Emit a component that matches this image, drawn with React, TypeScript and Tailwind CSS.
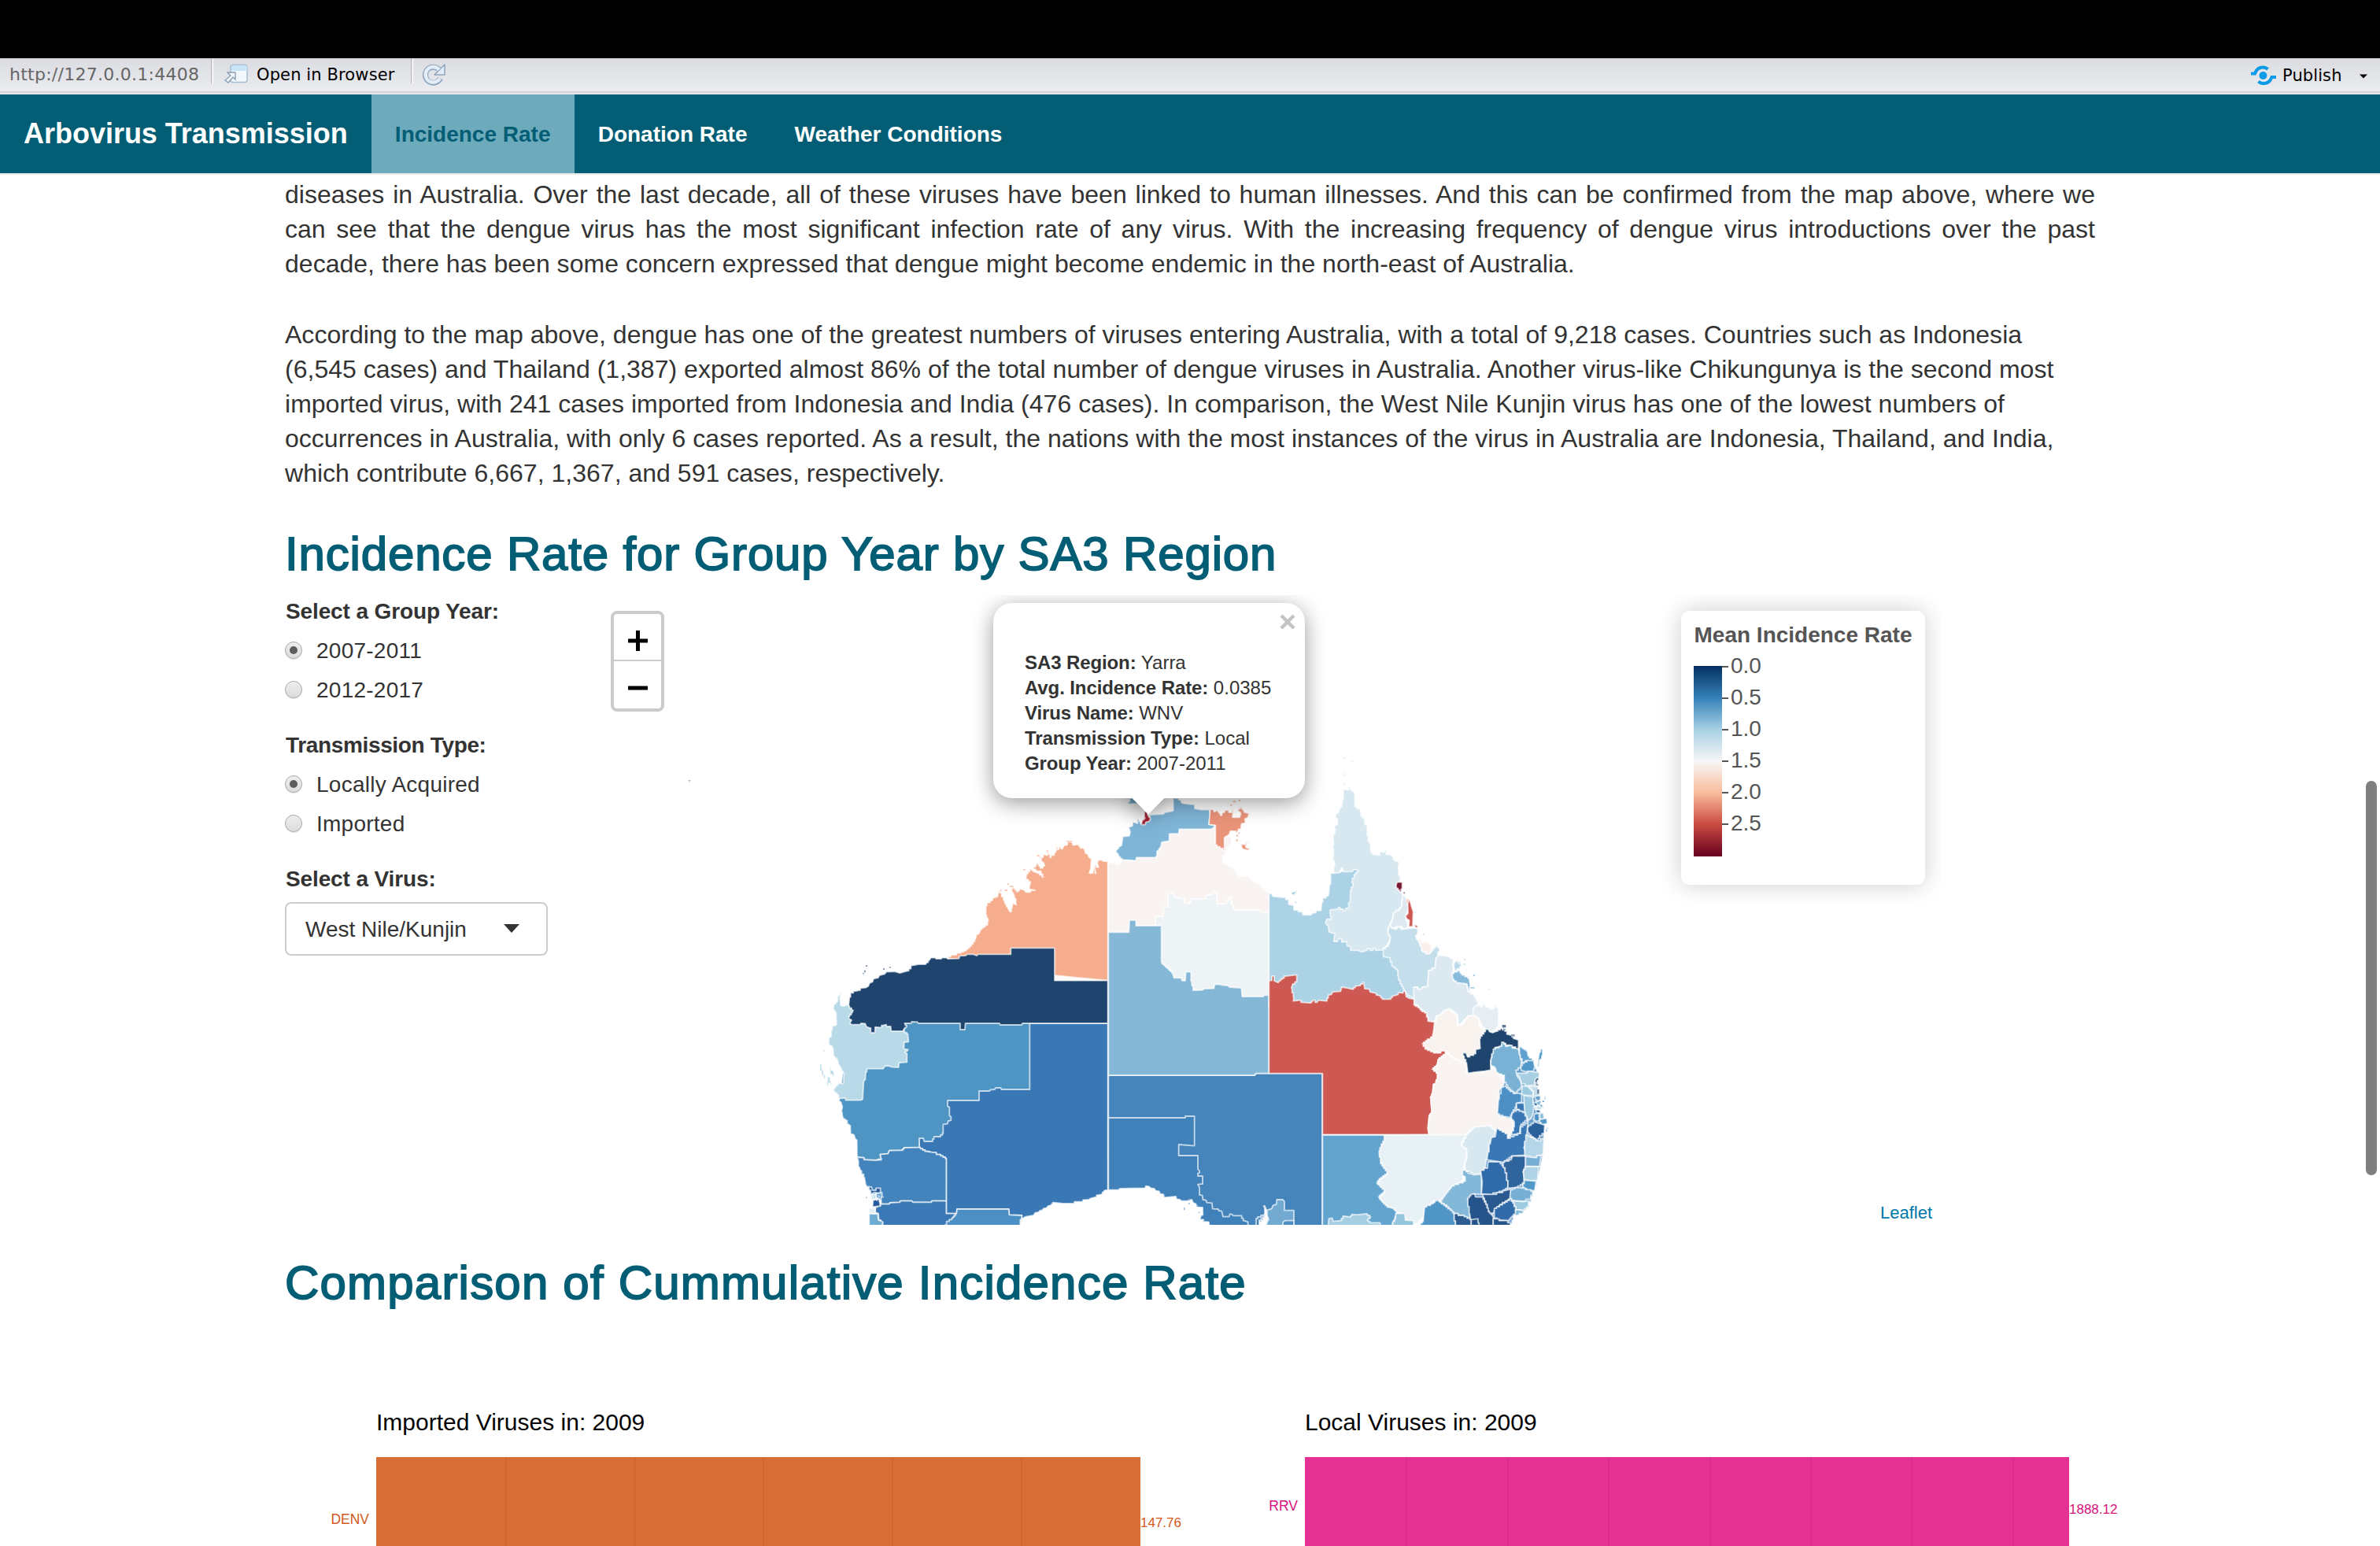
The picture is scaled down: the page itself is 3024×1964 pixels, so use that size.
import React from "react";

type Region = { fill: string; d: string };

/* All region outlines live in one drawing space, three units to a page pixel. */
const WA: Region[] = [
  { fill: "#3a77b5", d: "865,1080 1163,1080 1163,1715 1150,1717 1145,1724 1138,1732 1125,1735 1115,1743 1098,1747 1090,1752 1075,1753 1060,1760 1045,1760 1025,1767 985,1766 955,1763 945,1774 935,1776 930,1783 918,1786 912,1793 905,1793 900,1799 885,1803 880,1812 850,1817 840,1822 833,1828 835,1812 787,1810 785,1788 588,1788 586,1805 547,1805 547,1595 520,1580 470,1568 444,1553 430,1300 700,1080" },
  { fill: "#4f95c4", d: "865,1060 865,1332 757,1332 755,1326 735,1326 732,1332 715,1333 712,1338 672,1338 672,1374 552,1374 552,1396 559,1400 559,1432 565,1436 565,1450 554,1452 552,1463 535,1465 535,1500 522,1512 503,1512 492,1530 463,1530 460,1518 444,1518 444,1553 388,1554 378,1564 330,1565 325,1577 295,1580 300,1600 290,1597 278,1602 240,1600 225,1592 207,1590 206,1525 200,1520 195,1505 182,1500 181,1470 172,1464 165,1450 152,1440 150,1420 147,1418 151,1398 145,1380 138,1376 140,1366 180,1060" },
  { fill: "#b8d9e8", d: "148,960 142,985 145,1012 158,1014 170,1008 200,1040 390,1080 383,1110 400,1120 403,1150 390,1152 382,1168 388,1178 402,1180 388,1190 397,1195 397,1228 367,1230 365,1248 337,1246 330,1242 312,1243 307,1253 247,1253 240,1265 238,1295 232,1300 228,1370 220,1373 170,1373 155,1365 140,1366 132,1352 118,1340 115,1333 130,1315 138,1308 155,1310 157,1270 148,1262 145,1248 137,1240 132,1218 117,1205 115,1172 98,1160 100,1135 108,1130 108,1105 116,1090 128,1086 127,1040 115,1025 120,1005 132,998 134,975" },
  { fill: "#f5ad8d", d: "1163,463 1145,462 1142,458 1128,457 1122,468 1128,485 1112,478 1117,508 1110,485 1105,508 1092,508 1098,490 1100,453 1092,448 1086,435 1078,432 1075,418 1068,412 1060,412 1050,398 1030,401 1028,390 1010,386 1008,400 995,402 990,415 978,408 975,418 962,400 968,420 960,428 958,440 948,438 946,448 933,424 932,440 918,436 915,448 895,440 910,455 908,462 918,468 922,480 908,488 892,466 888,482 876,486 893,500 905,500 917,522 898,508 882,502 868,492 850,518 852,532 868,540 862,568 885,573 850,580 845,572 828,567 818,578 800,558 795,575 805,590 808,605 815,628 800,622 798,640 791,655 785,648 780,635 772,625 768,610 755,583 747,575 742,597 725,602 722,612 705,620 698,632 698,670 708,690 700,705 678,722 672,738 662,742 658,760 640,785 620,803 597,812 553,826 555,832 570,860 1163,917" },
  { fill: "#1f446e", d: "1163,917 960,917 960,793 793,793 793,817 668,817 663,822 650,817 628,817 620,822 598,823 595,833 553,834 548,830 530,830 528,834 508,834 505,830 488,830 482,840 473,848 468,855 440,855 415,860 408,872 400,880 385,884 370,888 350,882 318,884 312,892 292,897 288,906 270,910 266,922 255,926 250,938 240,944 222,946 215,954 200,957 186,964 178,980 175,1010 180,1022 192,1030 188,1040 176,1053 176,1062 186,1068 180,1078 185,1085 220,1084 222,1080 238,1081 242,1092 255,1098 262,1116 275,1116 276,1094 295,1096 305,1088 318,1085 320,1092 335,1092 337,1110 383,1110 385,1102 397,1092 388,1080 413,1080 415,1074 437,1075 440,1080 600,1080 600,1104 618,1104 620,1080 750,1080 752,1086 835,1086 837,1080 1163,1080" },
  { fill: "#4384bc", d: "207,1590 225,1592 240,1600 278,1602 300,1600 295,1580 325,1577 330,1565 378,1564 388,1554 444,1553 470,1568 498,1572 520,1580 547,1595 547,1757 492,1757 490,1762 420,1762 415,1757 372,1757 370,1762 332,1764 330,1769 302,1769 290,1740 280,1730 262,1735 252,1710 240,1698 235,1668 228,1655 220,1642 216,1630 212,1625 212,1605" },
  { fill: "#3b79b6", d: "278,1780 302,1769 330,1769 332,1764 370,1762 372,1757 415,1757 420,1762 490,1762 492,1757 547,1757 547,1805 586,1805 545,1860 300,1860 305,1838 290,1830 288,1805 276,1800" },
  { fill: "#4b8fc4", d: "588,1788 785,1788 787,1810 835,1812 833,1828 825,1860 540,1860 550,1835 565,1828 586,1805" },
  { fill: "#6dadd3", d: "253,1805 286,1806 288,1830 304,1836 305,1846 298,1860 253,1860" },
  { fill: "#28599a", d: "250,1702 262,1704 266,1716 292,1708 300,1724 288,1728 272,1724 262,1730" },
  { fill: "#72aad2", d: "278,1728 298,1726 306,1742 292,1750 276,1744" },
  { fill: "#c6deed", d: "258,1734 276,1732 284,1752 262,1752" },
  { fill: "#28599a", d: "268,1754 290,1750 296,1776 266,1780" },
  { fill: "#e6eff5", d: "256,1785 276,1783 276,1806 248,1804" },
  { fill: "#b8d9e8", d: "67,1238 70,1256 82,1280 78,1284 68,1260" },
  { fill: "#b8d9e8", d: "105,1240 108,1256 118,1262 122,1285 108,1275 100,1258" },
  { fill: "#b8d9e8", d: "90,1280 102,1285 112,1315 98,1308" },
];

/* Offset by the Northern Territory tile. */
const NORTH: Region[] = [
  { fill: "#4585bb", d: "25,1278 583,1278 587,1271 840,1271 840,1860 530,1860 440,1825 395,1780 350,1700 25,1600" },
  { fill: "#4181ba", d: "25,1440 318,1440 318,1434 353,1434 353,1547 293,1542 293,1584 366,1584 366,1636 372,1642 372,1650 366,1652 366,1662 384,1662 384,1692 366,1694 372,1706 372,1734 383,1736 385,1752 397,1754 400,1763 420,1765 422,1787 443,1788 446,1794 457,1796 462,1817 485,1817 488,1807 497,1808 500,1813 530,1813 542,1832 557,1837 557,1860 415,1860 405,1837 385,1836 388,1828 374,1828 378,1812 385,1810 384,1782 362,1780 358,1768 348,1764 343,1752 325,1757 302,1757 298,1752 285,1750 282,1740 237,1744 235,1732 222,1730 218,1720 205,1718 200,1710 186,1708 180,1702 168,1700 165,1708 68,1710 64,1715 25,1715" },
  { fill: "#4585bb", d: "588,1860 588,1824 612,1812 622,1808 604,1830 596,1860" },
  { fill: "#fefefe", d: "598,1860 606,1836 618,1822 624,1806 617,1776 626,1788 630,1810 636,1824 628,1834 624,1860" },
  { fill: "#72aad2", d: "625,1860 630,1838 636,1828 630,1812 630,1792 648,1786 652,1774 665,1770 667,1752 690,1752 696,1760 696,1793 732,1793 732,1860" },
  { fill: "#4b8fc4", d: "690,1860 690,1838 698,1832 732,1832 732,1860" },
  { fill: "#f9f3f1", d: "25,462 36,470 45,466 65,476 75,458 100,461 130,461 132,448 205,448 210,425 222,420 228,390 257,385 257,358 293,357 295,340 430,335 433,400 467,420 467,372 490,362 495,395 480,410 466,440 458,455 470,472 490,482 512,498 516,512 530,520 560,518 575,540 600,550 615,566 637,583 637,660 607,658 605,648 505,648 490,600 475,625 440,625 437,580 425,578 422,590 398,592 397,606 340,606 335,624 318,622 310,606 278,600 272,583 253,583 253,636 237,636 233,672 205,674 205,708 130,708 130,687 105,687 103,733 25,733" },
  { fill: "#7fb5d7", d: "50,425 65,408 75,402 80,368 104,366 108,352 102,332 116,328 118,312 136,318 134,296 150,318 170,305 185,285 235,282 240,276 272,270 272,215 300,228 305,240 326,244 350,246 358,262 380,266 410,265 413,290 408,322 430,325 425,336 415,340 295,340 293,357 257,358 257,385 228,390 225,408 216,420 210,425 210,440 205,448 132,448 130,460 105,458 80,457 66,446 60,432" },
  { fill: "#7fb5d7", d: "98,245 108,222 128,222 140,242 112,244" },
  { fill: "#a72338", d: "158,272 172,274 176,288 186,300 181,310 167,314 166,323 150,323 154,306 165,297" },
  { fill: "#e99379", d: "413,265 425,264 428,274 440,268 456,288 460,276 475,268 492,276 502,262 498,295 525,295 530,280 516,268 530,256 545,276 562,280 556,296 545,302 548,316 532,320 530,340 510,348 490,347 485,362 467,372 467,420 433,400 433,325 408,322" },
  { fill: "#e99379", d: "530,397 545,398 562,386 548,402 550,410 562,414 562,421 545,418 535,415" },
  { fill: "#eef3f6", d: "205,708 205,674 233,672 237,636 253,636 253,583 272,583 278,600 310,606 318,622 335,624 340,606 397,606 398,592 422,590 425,578 437,580 440,625 472,625 478,612 488,600 494,615 490,620 500,630 505,648 605,648 607,658 637,660 637,973 617,973 615,978 535,978 532,945 487,942 480,936 455,934 452,931 430,932 427,947 388,948 385,953 350,954 345,935 340,920 340,884 320,884 318,918 305,917 303,907 275,907 270,888 227,848" },
  { fill: "#85b8d7", d: "25,733 103,733 105,687 130,687 130,708 227,708 227,848 270,888 275,907 303,907 305,917 318,918 320,884 340,884 340,920 350,954 385,953 388,948 427,947 430,932 452,931 455,934 480,936 487,942 532,945 535,978 615,978 617,973 637,973 637,1271 587,1271 583,1278 25,1278" },
  { fill: "#abd2e5", d: "637,583 648,587 652,596 690,600 712,608 712,626 728,630 735,648 762,655 770,667 797,667 802,660 815,658 818,650 835,650 838,618 845,602 862,595 865,585 867,556 872,548 872,508 980,490 1000,700 1100,800 1160,900 1200,1000 900,1060 637,1020" },
  { fill: "#abd2e5", d: "722,580 735,578 748,572 742,582 732,592 722,588" },
  { fill: "#d8e8f0", d: "920,187 935,190 942,180 950,190 964,200 965,255 978,262 985,260 988,290 1003,302 1003,322 1012,326 1012,365 1018,368 1014,385 1024,392 1025,425 1035,436 1055,438 1062,425 1075,428 1080,418 1088,436 1108,440 1112,456 1138,468 1130,480 1132,515 1138,522 1138,540 1125,542 1120,558 1137,578 1148,588 1148,608 1142,612 1145,630 1130,650 1112,658 1108,685 1098,702 1098,712 1090,715 1092,740 1100,745 1097,768 1085,785 1070,800 1048,802 1038,795 1028,802 1015,795 1008,802 992,808 975,802 948,802 948,788 935,785 933,768 918,770 910,757 900,760 898,768 884,768 888,738 866,732 862,705 852,698 858,682 874,684 870,662 870,648 898,645 902,638 925,652 930,642 942,640 940,622 946,618 948,572 960,550 952,542 965,512 978,498 960,492 955,502 922,502 916,488 905,506 880,508 888,480 886,462 880,455 884,430 880,402 886,395 878,370 890,350 885,328 898,322 898,300 888,298 894,280 904,275 902,262 915,255 916,230 920,228" },
  { fill: "#761a34", d: "1125,542 1145,542 1145,568 1137,578 1120,560" },
  { fill: "#dce9f1", d: "1150,590 1160,600 1164,620 1168,650 1157,670 1168,708 1165,716 1150,722 1140,710 1130,722 1120,712 1110,722 1100,712 1098,705 1108,685 1112,658 1130,650 1145,630 1142,612" },
  { fill: "#cc5650", d: "1166,624 1172,606 1177,622 1182,640 1187,655 1185,705 1186,711 1170,712 1172,688 1162,682 1157,670 1167,660" },
  { fill: "#cc5650", d: "1190,703 1204,708 1204,716 1196,716" },
];

/* Offset by the eastern tile. The first outline backs the small coastal regions. */
const EAST: Region[] = [
  { fill: "#6a9fcd", d: "470,600 560,420 640,290 665,320 690,345 705,370 700,410 712,455 712,520 726,560 724,640 718,700 700,780 686,820 666,880 640,905 612,915 596,960 300,960 420,800" },
  { fill: "#c5deeb", d: "135,-190 150,-182 160,-178 170,-190 183,-178 212,-182 243,-183 245,-165 236,-150 250,-135 262,-98 285,-85 300,-100 318,-118 330,-98 320,-88 325,-72 313,-66 311,-30 286,-22 282,40 262,42 258,50 232,42 230,85 208,75 195,58 180,30 168,0 168,-22 148,-38 136,-70 113,-74 113,-105 128,-112 138,-130 140,-152 130,-160" },
  { fill: "#faf0ec", d: "237,-150 252,-142 262,-130 280,-132 292,-122 298,-100 288,-85 262,-93 256,-118" },
  { fill: "#dce9f1", d: "325,-80 345,-78 362,-74 380,-64 378,-42 380,-25 374,-5 385,20 430,30 436,60 455,68 478,105 462,122 458,150 440,152 425,165 400,190 396,150 390,142 365,125 345,130 330,148 315,152 310,170 288,175 275,140 250,122 245,110 230,108 230,85 228,42 258,50 262,42 282,40 286,-22 311,-30 313,-66" },
  { fill: "#bad8e8", d: "380,-48 395,-62 400,-48 412,-44 402,-28 385,-20" },
  { fill: "#88bada", d: "375,-10 402,-22 408,-10 440,8 445,40 438,58 432,30 395,25 378,12" },
  { fill: "#e6eef4", d: "455,122 475,108 488,118 492,100 506,118 530,125 540,112 552,120 552,190 530,215 505,205 490,195 475,160 455,150" },
  { fill: "#f9f3f0", d: "310,173 318,152 335,146 345,132 365,127 390,145 398,188 415,185 425,165 440,152 458,150 475,162 480,190 500,205 480,238 482,275 465,295 440,305 420,290 415,298 432,320 425,335 400,320 385,315 355,290 310,293 275,278 262,258 285,240 300,232 305,205" },
  { fill: "#cd5952", d: "-323,18 -312,16 -312,0 -303,0 -303,18 -290,24 -270,8 -260,0 -217,-5 -217,22 -232,30 -238,45 -228,80 -230,95 -205,92 -198,100 -165,102 -155,92 -140,100 -135,92 -105,95 -95,72 -85,70 -80,60 -50,58 -46,42 -25,45 -5,50 10,38 22,36 38,24 42,48 60,50 62,60 82,65 90,72 100,75 112,88 138,88 150,76 170,70 170,62 188,65 190,56 197,60 200,78 210,84 230,88 230,110 250,120 255,130 275,140 285,172 308,175 305,205 300,232 285,240 262,258 275,278 310,293 353,285 345,300 322,318 318,340 300,355 312,362 322,378 315,395 312,410 304,412 300,450 293,460 298,520 288,530 283,580 287,604 -119,604 -119,371 -323,371" },
  { fill: "#f9f4f2", d: "355,292 385,315 400,320 425,335 432,365 480,368 520,358 540,350 545,372 562,380 575,400 570,418 555,430 552,465 547,525 560,535 600,542 612,555 605,590 590,618 580,600 555,585 545,582 540,592 520,570 460,576 430,604 287,604 283,580 288,530 298,520 293,460 300,450 304,412 312,410 315,395 322,378 312,362 300,355 318,340 322,318 345,300" },
  { fill: "#1f446e", d: "505,203 512,202 518,212 530,216 545,210 562,200 580,210 588,222 600,225 612,238 628,244 628,278 605,270 570,256 560,268 540,272 530,300 522,320 522,358 500,362 465,366 435,370 430,330 418,305 415,293 428,292 434,308 465,296 465,280 482,276 480,238" },
  { fill: "#7ab2d5", d: "535,278 560,268 568,252 582,268 600,264 608,274 628,278 632,300 640,320 636,350 618,358 622,380 636,395 640,425 630,432 615,448 590,425 578,405 570,378 545,368 540,350 522,340 524,312" },
  { fill: "#5fa0cf", d: "632,265 645,275 662,285 665,305 685,318 690,328 662,322 645,330 632,300" },
  { fill: "#5098c8", d: "645,332 665,322 685,322 690,345 685,362 660,366 640,360 636,350" },
  { fill: "#5098c8", d: "708,290 716,278 724,298 718,302 716,315 708,320 706,345 700,345 704,315" },
  { fill: "#a8d0e2", d: "622,370 658,370 665,362 708,368 706,390 692,396 690,415 665,418 640,410 636,395" },
  { fill: "#1f446e", d: "693,392 700,387 707,390 698,404 707,420 698,418 690,405" },
  { fill: "#9ccae0", d: "642,418 665,420 680,435 688,455 655,455 640,450" },
  { fill: "#c5deeb", d: "665,418 700,420 712,455 688,458 680,438" },
  { fill: "#4b8fc4", d: "565,425 578,420 600,440 615,448 625,446 640,450 640,480 620,485 618,500 605,520 595,538 575,535 548,525 552,470" },
  { fill: "#3a77b5", d: "620,485 650,483 655,520 640,515 622,508" },
  { fill: "#9ccae0", d: "648,455 680,460 688,490 684,520 678,540 665,550 652,520" },
  { fill: "#3a77b5", d: "605,520 625,510 650,520 662,545 635,570 632,600 600,605 612,575 612,555 600,542" },
  { fill: "#30649c", d: "683,465 692,462 694,480 686,482" },
  { fill: "#84b8d9", d: "696,478 712,472 714,490 698,495" },
  { fill: "#c5deeb", d: "690,495 706,496 722,488 724,505 706,512 692,508" },
  { fill: "#30649c", d: "694,510 712,510 710,522 696,520" },
  { fill: "#84b8d9", d: "726,458 732,458 732,472 726,472" },
  { fill: "#4b8fc4", d: "684,545 692,525 706,522 708,550 696,554" },
  { fill: "#84b8d9", d: "710,525 722,520 726,542 710,548" },
  { fill: "#5098c8", d: "710,546 736,542 738,562 720,566 708,558" },
  { fill: "#d7e8f0", d: "430,605 460,576 520,570 540,590 535,610 518,640 515,690 505,700 500,740 480,755 460,755 440,745 425,740 422,715 432,690 430,660 410,645" },
  { fill: "#e8f1f6", d: "118,606 430,604 410,640 412,650 430,660 430,690 420,720 415,780 400,792 375,800 345,840 325,860 305,855 295,870 268,882 268,915 250,935 230,948 195,930 195,905 165,900 150,885 130,880 105,855 100,840 120,822 105,805 90,788 100,775 130,752 118,735 100,700 95,660 112,635" },
  { fill: "#62a4ce", d: "-119,606 115,606 118,620 108,640 97,665 98,690 105,715 130,750 100,772 88,788 105,805 120,818 95,842 105,855 130,880 150,885 165,900 155,930 140,960 -119,960" },
  { fill: "#a5cee2", d: "-98,960 -95,925 -82,922 -78,935 -50,932 -38,915 -15,918 -5,908 10,910 48,906 65,918 52,930 65,940 100,940 105,960" },
  { fill: "#96c5de", d: "145,960 152,935 160,925 160,905 195,905 197,930 228,932 228,960" },
  { fill: "#84b8d9", d: "415,740 425,740 440,752 462,758 480,755 487,758 487,832 455,830 450,842 435,850 445,865 442,925 415,912 380,905 360,880 330,860 345,838 375,800 425,782 425,765 415,760" },
  { fill: "#4f95c6", d: "235,960 265,935 270,880 300,868 318,852 330,862 355,880 380,900 390,960" },
  { fill: "#3a77b5", d: "545,578 560,588 582,600 590,618 632,600 640,575 665,555 660,600 662,625 650,650 655,682 605,685 570,710 508,700 512,670 520,640 525,615 540,612" },
  { fill: "#2f6aa9", d: "484,740 510,732 512,708 555,708 575,730 580,750 590,805 565,820 520,832 487,830 490,785" },
  { fill: "#30649c", d: "566,710 600,700 605,686 655,686 655,730 645,745 652,780 640,795 620,805 590,808 580,750" },
  { fill: "#29609a", d: "662,575 690,556 710,562 728,568 726,600 710,608 700,628 680,612 665,598" },
  { fill: "#b4d6e8", d: "658,605 690,620 700,628 725,620 722,680 705,684 690,692 655,685 648,655" },
  { fill: "#76aed4", d: "655,688 690,692 705,684 714,684 708,726 655,724" },
  { fill: "#b0d4e6", d: "655,726 705,726 700,780 670,778 650,775 646,745" },
  { fill: "#4f98c8", d: "652,778 695,782 690,818 665,815 642,804" },
  { fill: "#76aed4", d: "598,815 620,806 645,808 685,820 672,850 640,858 605,855 592,840" },
  { fill: "#9ccae0", d: "605,857 645,860 668,856 664,880 645,892 620,890" },
  { fill: "#84b8d9", d: "608,900 620,890 648,894 645,905 615,912" },
  { fill: "#29598f", d: "490,832 530,832 560,825 575,818 598,812 595,850 560,870 545,885 525,912 512,895 505,870" },
  { fill: "#306aa9", d: "540,885 572,866 598,850 608,865 620,890 612,908 590,932 560,930 532,922" },
  { fill: "#25548a", d: "433,850 448,832 460,830 465,842 490,842 505,870 515,898 532,915 532,960 445,960 445,925 442,905" },
  { fill: "#2c5c92", d: "380,905 415,912 448,928 448,960 390,960" },
  { fill: "#25548a", d: "448,928 470,925 478,940 475,960 448,960" },
  { fill: "#25548a", d: "532,925 575,932 598,940 596,960 532,960" },
];

const pebbles: [number, number, number, number, string][] = [
  [240, 858, 6, 6, "#8b9fb8"], [234, 878, 6, 8, "#8b9fb8"], [228, 888, 6, 4, "#8b9fb8"], [306, 870, 6, 6, "#8b9fb8"], [330, 864, 5, 6, "#8b9fb8"],
  [78, 1182, 6, 5, "#d5e8f1"], [780, 546, 6, 6, "#f8cbb6"], [790, 555, 12, 6, "#f8cbb6"], [770, 570, 10, 6, "#f8cbb6"], [840, 492, 8, 5, "#f8cbb6"],
  [893, 438, 8, 6, "#f8cbb6"], [930, 420, 5, 8, "#f8cbb6"], [1005, 384, 22, 4, "#f8cbb6"], [752, 570, 6, 6, "#f8cbb6"], [1452, 1782, 5, 10, "#a0c0dd"],
  [1470, 1750, 6, 5, "#a0c0dd"], [1470, 1764, 5, 6, "#a0c0dd"], [1500, 1772, 6, 5, "#a0c0dd"], [1508, 1798, 5, 6, "#a0c0dd"],
  [2058, 66, 10, 5, "#eaf2f6"], [2088, 78, 12, 5, "#eaf2f6"], [2058, 127, 5, 6, "#eaf2f6"], [2065, 132, 5, 6, "#eaf2f6"], [2059, 163, 10, 8, "#eaf2f6"],
  [1640, 232, 10, 6, "#f2bfae"], [1662, 228, 6, 6, "#f2bfae"], [1630, 246, 6, 6, "#f2bfae"], [1650, 345, 6, 6, "#f2bfae"], [1652, 362, 8, 6, "#f2bfae"],
  [1652, 378, 6, 8, "#f2bfae"], [1660, 352, 6, 5, "#f2bfae"], [1876, 615, 6, 7, "#cbe3ef"], [2302, 605, 6, 16, "#fbd3c0"], [2290, 580, 5, 6, "#a7788a"],
  [2364, 738, 6, 6, "#d5e8f1"], [2500, 845, 6, 10, "#d5e8f1"], [2520, 834, 6, 6, "#d5e8f1"], [2518, 852, 8, 6, "#d5e8f1"], [2556, 894, 6, 6, "#a7cbe2"],
  [2545, 942, 16, 5, "#a7cbe2"], [2610, 948, 12, 5, "#eef5f7"], [2666, 1086, 14, 10, "#5d7694"], [2670, 1100, 8, 8, "#8b9fb8"], [2700, 1122, 14, 8, "#8b9fb8"],
  [2800, 1332, 6, 16, "#5d7694"], [240, 1742, 5, 5, "#a0c0dd"], [2832, 1482, 6, 12, "#bcd8ea"], [2836, 1475, 6, 8, "#d5e8f1"], [2786, 1368, 6, 6, "#84b8d9"],
  [2805, 1378, 8, 5, "#84b8d9"], [2792, 1386, 6, 6, "#30649c"], [2812, 1390, 5, 6, "#4b8fc4"], [2820, 1375, 5, 5, "#4b8fc4"],
  [66, 1236, 6, 24, "#cfe4ef"], [72, 1258, 6, 18, "#cfe4ef"], [80, 1276, 5, 14, "#cfe4ef"], [92, 1302, 5, 14, "#cfe4ef"],
];

const dust: [number, number][] = [
  [262, 1738], [268, 1744], [276, 1740], [284, 1745], [270, 1750], [280, 1752], [265, 1730], [288, 1738],
  [2795, 1370], [2802, 1374], [2810, 1382], [2798, 1388], [2806, 1394], [2815, 1386], [2796, 1402], [2814, 1400], [2806, 1408], [2790, 1396],
];

/* Turns sloping edges into small stairs; neighbours sharing an edge get the same stairs. */
function stepped(d: string): string {
  const pts = d.split(" ").map((p) => p.split(",").map(Number));
  const out: string[] = [];
  pts.forEach((a, i) => {
    const b = pts[(i + 1) % pts.length];
    out.push(a.join(","));
    const dx = Math.abs(b[0] - a[0]);
    const dy = Math.abs(b[1] - a[1]);
    if (Math.min(dx, dy) < 7 || Math.max(dx, dy) > 60) return;
    const flip = a[0] > b[0] || (a[0] === b[0] && a[1] > b[1]);
    const [s, e] = flip ? [b, a] : [a, b];
    const n = Math.max(1, Math.round(Math.min(dx, dy) / 6));
    const stairs: string[] = [];
    for (let k = 0; k < n; k++) {
      const x = Math.round(s[0] + ((e[0] - s[0]) * (k + 0.5)) / n);
      const y0 = Math.round(s[1] + ((e[1] - s[1]) * k) / n);
      const y1 = Math.round(s[1] + ((e[1] - s[1]) * (k + 1)) / n);
      stairs.push(`${x},${y0}`, `${x},${y1}`);
    }
    out.push(...(flip ? stairs.reverse() : stairs));
  });
  return out.join(" ");
}

function Shapes({ list }: { list: Region[] }) {
  return (
    <>
      {list.map((r, i) => (
        <polygon key={i} points={stepped(r.d)} fill={r.fill} stroke="#ffffff" strokeOpacity="0.68" strokeWidth="5.5" strokeLinejoin="round" />
      ))}
    </>
  );
}

function AustraliaMap() {
  return (
    <svg className="absolute inset-0 block h-full w-full" viewBox="756 756 1710 800" aria-hidden="true">
      <g transform="translate(1020 940) scale(0.333333)">
        <Shapes list={WA} />
        <g transform="translate(1140 0)">
          <Shapes list={NORTH} />
        </g>
        <g transform="translate(2100 900)">
          <Shapes list={EAST} />
        </g>
        {pebbles.map(([x, y, w, h, f], i) => (
          <rect key={i} x={x} y={y} width={w} height={h} fill={f} />
        ))}
        {dust.map(([x, y], i) => (
          <rect key={i} x={x} y={y} width="5" height="5" fill="#ffffff" opacity="0.85" />
        ))}
      </g>
      <path d="M874.500 991.500 h3 M876 991.500 v2.500" stroke="#a9bdd0" strokeWidth="1" />
    </svg>
  );
}

function Toolbar() {
  return (
    <div className="flex h-[46px] items-center border-b-2 border-[#e7e7eb] font-['DejaVu_Sans',sans-serif] text-[21px] leading-none shadow-[inset_0_-2px_0_#d4d4d8] bg-linear-to-b from-[#dbdce1] to-[#ecedf1]">
      <span className="ml-[12px] -mt-[3px] w-[256px] text-[22px] tracking-[0.26px] text-[#666]">http://127.0.0.1:4408</span>
      <span className="-mt-[12px] h-[32px] w-[3px] border-r border-l border-l-[#b9b9bd] border-r-white" />
      <svg className="ml-[13px] -mt-[4px] h-[26px] w-[32px]" viewBox="0 0 32 26">
        <rect x="9" y="1.500" width="21" height="22" rx="3" fill="#f3f8fc" stroke="#a3bccf" strokeWidth="1.500" />
        <path d="M10 9 V4 q0-2 3-2 h14 q3 0 3 2 v5z" fill="#c9e3f7" />
        <path d="M2 21 L9 15 L5 11 H15 V20 L12 17 L6 24 Z" fill="#f4f7fa" stroke="#8aa0b4" strokeWidth="1.400" />
      </svg>
      <span className="ml-[10px] -mt-[2px] w-[196px] tracking-[0.12px] text-black">Open in Browser</span>
      <span className="-mt-[12px] h-[32px] w-[3px] border-r border-l border-l-[#b9b9bd] border-r-white" />
      <svg className="ml-[10px] h-[32px] w-[32px]" viewBox="0 0 32 32">
        <path d="M24.500 19.500 A10 10 0 1 1 22.500 8" fill="none" stroke="#8ea4bd" strokeWidth="7" />
        <path d="M30 2 V15 H17 Z" fill="#e3edf8" stroke="#8ea4bd" strokeWidth="1.500" strokeLinejoin="round" />
        <path d="M24 19.500 A9.800 9.800 0 1 1 23 8.500" fill="none" stroke="#e3edf8" strokeWidth="4.500" />
      </svg>
      <svg className="ml-auto h-[26px] w-[34px]" viewBox="0 0 34 26">
        <circle cx="16.500" cy="13" r="5" fill="#0d9be8" />
        <path d="M1 10.500 H6 C8 5 12 2.500 16 2.500 C19 2.500 21 3.500 22.500 5" fill="none" stroke="#0d9be8" strokeWidth="4" />
        <path d="M33 15 H27.500 C25.500 20.500 21.500 23 17.500 23 C14 23 12 22 10.500 20.500" fill="none" stroke="#0d9be8" strokeWidth="4" />
      </svg>
      <span className="ml-[7px] w-[98px] tracking-[0.1px] text-black">Publish</span>
      <svg className="mr-[16px] mt-[2px] h-[6px] w-[10px]" viewBox="0 0 10 6">
        <path d="M0 0.500 H10 L5 5.500 Z" fill="#000" />
      </svg>
    </div>
  );
}

function NavBar() {
  return (
    <nav className="flex h-[102px] items-stretch border-b-2 border-[#e7e7e7] bg-[#035e75] pt-px text-[28px] font-bold text-white">
      <div className="flex items-center px-[30px] pb-px text-[36px] tracking-[-0.02px]">Arbovirus Transmission</div>
      <div className="-mt-px flex w-[258px] items-center justify-center bg-[#6dabbc] pt-[2px] text-[#035e75]">Incidence Rate</div>
      <div className="flex items-center px-[30px]">Donation Rate</div>
      <div className="flex items-center px-[30px]">Weather Conditions</div>
    </nav>
  );
}

function Radio({ label, checked }: { label: string; checked?: boolean }) {
  return (
    <label className="flex h-[50px] items-center gap-[18px]">
      <span className="-mt-px flex h-[22px] w-[22px] items-center justify-center rounded-full border-[1.5px] border-[#a9a9a9] shadow-[0_1px_1px_rgba(0,0,0,0.12)] bg-linear-to-b from-[#eeeeee] to-[#dcdcdc]">
        {checked && <span className="h-[10px] w-[10px] rounded-full bg-[#5c5c5c]" />}
      </span>
      <span className="pt-px tracking-[0.25px]">{label}</span>
    </label>
  );
}

function Controls() {
  return (
    <div className="w-[394px] shrink-0 text-[28px] leading-[40px]">
      <div className="pt-px pl-px font-bold tracking-[-0.12px]">Select a Group Year:</div>
      <div className="mt-[4px]">
        <Radio label="2007-2011" checked />
        <Radio label="2012-2017" />
      </div>
      <div className="mt-[26px] pl-px font-bold tracking-[-0.35px]">Transmission Type:</div>
      <div className="mt-[4px]">
        <Radio label="Locally Acquired" checked />
        <Radio label="Imported" />
      </div>
      <div className="mt-[26px] pl-px font-bold tracking-[-0.12px]">Select a Virus:</div>
      <div className="mt-[9px] flex h-[68px] w-[334px] items-center justify-between rounded-[8px] border-2 border-[#ccc] bg-white pr-[34px] pl-[24px]">
        <span className="pt-px">West Nile/Kunjin</span>
        <svg className="-mt-[2px] h-[11px] w-[20px]" viewBox="0 0 20 11">
          <path d="M0 0 H20 L10 11 Z" fill="#333" />
        </svg>
      </div>
    </div>
  );
}

const popupRows = [
  ["SA3 Region:", "Yarra"],
  ["Avg. Incidence Rate:", "0.0385"],
  ["Virus Name:", "WNV"],
  ["Transmission Type:", "Local"],
  ["Group Year:", "2007-2011"],
];

function Popup() {
  return (
    <div className="absolute top-[10px] left-[506px] h-[248px] w-[396px]">
      <div className="absolute bottom-[-14px] left-[181px] h-[32px] w-[32px] rotate-45 bg-white shadow-[0_6px_28px_rgba(0,0,0,0.4)]" />
      <div className="relative h-full rounded-[24px] bg-white pt-[60px] pl-[40px] text-[24px] leading-[32px] shadow-[0_6px_28px_rgba(0,0,0,0.4)]">
        {popupRows.map(([k, v]) => (
          <div key={k} className="whitespace-nowrap">
            <b className="tracking-[-0.1px]">{k}</b> {v}
          </div>
        ))}
        <svg className="absolute top-[14px] right-[12px] h-[20px] w-[20px]" viewBox="0 0 20 20">
          <path d="M2 2 L18 18 M18 2 L2 18" stroke="#c3c3c3" strokeWidth="4.500" />
        </svg>
      </div>
      <div className="absolute bottom-[-14px] left-[181px] h-[32px] w-[32px] rotate-45 bg-white [clip-path:polygon(100%_0,100%_100%,0_100%)]" />
    </div>
  );
}

function Legend() {
  return (
    <div className="absolute top-[20px] right-[20px] h-[348px] w-[310px] rounded-[10px] bg-white px-[16px] pt-[15px] text-[28px] text-[#555] shadow-[0_0_30px_rgba(0,0,0,0.2)]">
      <div className="text-center font-bold leading-[32px] whitespace-nowrap">Mean Incidence Rate</div>
      <div className="mt-[23px] flex">
        <div className="h-[242px] w-[36px] [background-image:linear-gradient(to_bottom,#053061_0%,#3480b9_16.6%,#a7d0e4_33.3%,#f7f7f7_50%,#f9bc9b_66.6%,#c94a41_83.3%,#67001f_100%)]" />
        <div className="-mt-[19px]">
          {["0.0", "0.5", "1.0", "1.5", "2.0", "2.5"].map((t) => (
            <div key={t} className="flex h-[40px] items-center gap-[3px]">
              <span className="h-[2px] w-[8px] bg-[#555]" />
              <span className="-mt-[3px]">{t}</span>
            </div>
          ))}
        </div>
      </div>
    </div>
  );
}

function MapPanel() {
  return (
    <div className="relative h-[800px] w-[1710px] shrink-0 overflow-hidden">
      <AustraliaMap />
      <div className="absolute top-[20px] left-[20px] h-[128px] w-[68px] rounded-[8px] border-4 border-[#cbcbcb] bg-white">
        <svg className="block h-[120px] w-[60px]" viewBox="0 0 60 120">
          <path d="M18 34 H43 M30.500 21 V47 M18 94 H43" stroke="#000" strokeWidth="5" />
          <path d="M0 59 H60" stroke="#cbcbcb" strokeWidth="2" />
        </svg>
      </div>
      <Popup />
      <Legend />
      <div className="absolute right-[11px] bottom-0 text-[22px] leading-[30px] text-[#0078a8]">Leaflet</div>
    </div>
  );
}

function BarPanel({ title, code, value, bar, line, text, grid, codeTop, valueTop, label }: {
  title: string; code: string; value: string; bar: string; line: string; text: string; grid: number[]; codeTop: string; valueTop: string; label: string;
}) {
  return (
    <div className={label}>
      <div className="pl-[76px] text-[30px] leading-[36px] text-black">{title}</div>
      <div className="mt-[26px] flex h-[113px]">
        <div className={`w-[67px] shrink-0 text-right text-[17.5px] leading-[20px] ${codeTop} ${text}`}>{code}</div>
        <div className={`relative ml-[9px] w-[971px] shrink-0 ${bar}`}>
          {grid.map((g) => (
            <span key={g} className={`absolute inset-y-0 w-[2px] ${line}`} style={{ left: g }} />
          ))}
        </div>
        <div className={`text-[17px] leading-[20px] ${valueTop} ${text}`}>{value}</div>
      </div>
    </div>
  );
}

export default function App() {
  return (
    <div className="relative h-[1964px] w-[3024px] overflow-hidden bg-white font-['Liberation_Sans',Arial,sans-serif] text-[#333]">
      <div className="h-[74px] bg-black" />
      <Toolbar />
      <NavBar />
      <main className="ml-[362px] w-[2300px] pt-[3px]">
        <div className="text-[32px] leading-[44px] whitespace-nowrap">
          <p className="[text-align-last:justify]">diseases in Australia. Over the last decade, all of these viruses have been linked to human illnesses. And this can be confirmed from the map above, where we</p>
          <p className="[text-align-last:justify]">can see that the dengue virus has the most significant infection rate of any virus. With the increasing frequency of dengue virus introductions over the past</p>
          <p className="tracking-[0.02px]">decade, there has been some concern expressed that dengue might become endemic in the north-east of Australia.</p>
          <p className="mt-[46px] tracking-[0.02px]">
            According to the map above, dengue has one of the greatest numbers of viruses entering Australia, with a total of 9,218 cases. Countries such as Indonesia<br />
            (6,545 cases) and Thailand (1,387) exported almost 86% of the total number of dengue viruses in Australia. Another virus-like Chikungunya is the second most<br />
            imported virus, with 241 cases imported from Indonesia and India (476 cases). In comparison, the West Nile Kunjin virus has one of the lowest numbers of<br />
            occurrences in Australia, with only 6 cases reported. As a result, the nations with the most instances of the virus in Australia are Indonesia, Thailand, and India,<br />
            which contribute 6,667, 1,367, and 591 cases, respectively.
          </p>
        </div>
        <h2 className="mt-[48px] text-[60px] leading-[66px] tracking-[0.84px] text-[#035e75] [-webkit-text-stroke:1.8px_#035e75]">Incidence Rate for Group Year by SA3 Region</h2>
        <div className="mt-[19px] flex">
          <Controls />
          <MapPanel />
        </div>
        <h2 className="mt-[41px] text-[60px] leading-[66px] tracking-[1.2px] text-[#035e75] [-webkit-text-stroke:1.8px_#035e75]">Comparison of Cummulative Incidence Rate</h2>
        <div className="mt-[126px] ml-[40px] flex">
          <BarPanel
            label="w-[1180px] shrink-0" title="Imported Viruses in: 2009" code="DENV" value="147.76"
            bar="bg-[#d66e35]" line="bg-[#d0672f]" text="text-[#d2581c]" codeTop="pt-[69px]" valueTop="pt-[74px]"
            grid={[164, 328, 491, 655, 819]}
          />
          <BarPanel
            label="shrink-0" title="Local Viruses in: 2009" code="RRV" value="1888.12"
            bar="bg-[#e53192]" line="bg-[#d92d8b]" text="text-[#d6127c]" codeTop="pt-[52px]" valueTop="pt-[57px]"
            grid={[128, 257, 385, 514, 642, 770, 899]}
          />
        </div>
      </main>
      <div className="absolute top-[992px] right-[4px] h-[501px] w-[14px] rounded-full bg-[#7f7f7f]" />
    </div>
  );
}
